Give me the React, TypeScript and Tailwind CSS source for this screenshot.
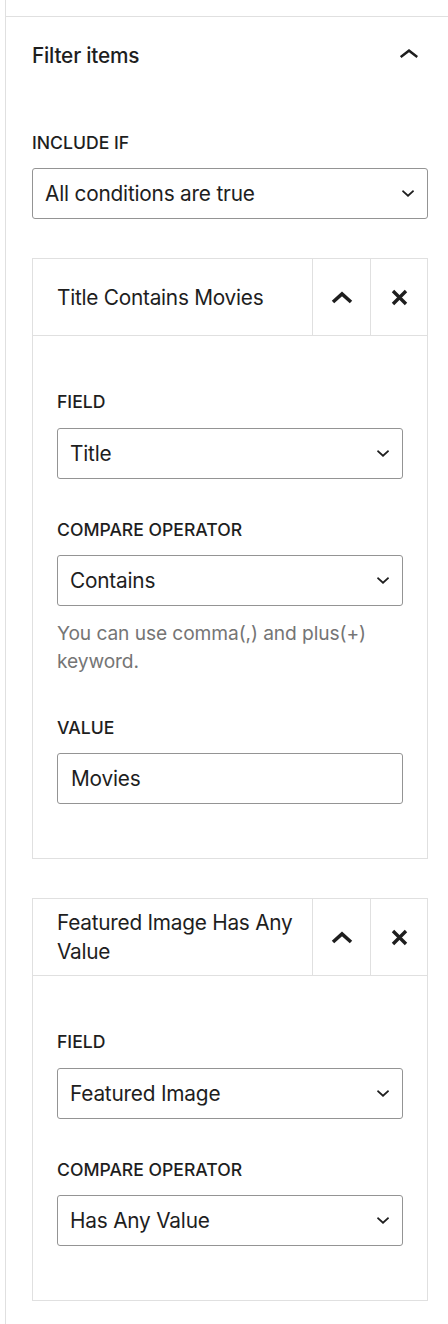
import type { ReactNode } from 'react';

const font = { fontFamily: 'Inter, "Noto Sans", sans-serif' };

const ChevronDown = () => (
  <svg width="12" height="7" viewBox="6.5 10.4 11 5.6" preserveAspectRatio="none" className="shrink-0">
    <path d="M17.5 11.6L12 16l-5.5-4.4.9-1.2L12 14l4.6-3.6 1 1.2z" fill="#1e1e1e" />
  </svg>
);

const PanelChevronUp = () => (
  <svg width="18" height="9" viewBox="6.5 8 11 5.6" preserveAspectRatio="none">
    <path d="M6.5 12.4L12 8l5.5 4.4-.9 1.2L12 10l-4.6 3.6-1-1.2z" fill="#1e1e1e" />
  </svg>
);

const BoldChevronUp = () => (
  <svg width="22" height="13" viewBox="0 0 22 13">
    <polyline points="2,11 11,3 20,11" fill="none" stroke="#1e1e1e" strokeWidth="3.6" />
  </svg>
);

const BoldClose = () => (
  <svg width="17" height="17" viewBox="0 0 17 17">
    <path d="M2 2L15 15M15 2L2 15" fill="none" stroke="#1e1e1e" strokeWidth="3.4" />
  </svg>
);

const Label = ({ children }: { children: ReactNode }) => (
  <div className="text-[17.6px] leading-[24.6px] font-medium uppercase text-[#1e1e1e] mb-[12.8px]">{children}</div>
);

const Select = ({ value }: { value: string }) => (
  <div className="h-[51px] border border-[#949494] rounded-[3px] flex items-center justify-between pl-[12px] pr-[13px] bg-white">
    <span className="text-[20.8px] tracking-[-0.2px] text-[#1e1e1e]">{value}</span>
    <ChevronDown />
  </div>
);

const Input = ({ value }: { value: string }) => (
  <div className="h-[51px] border border-[#949494] rounded-[3px] flex items-center pl-[13px] bg-white">
    <span className="text-[20.8px] tracking-[-0.2px] text-[#1e1e1e]">{value}</span>
  </div>
);

const ConditionCard = ({ title, children }: { title: string; children: ReactNode }) => (
  <div className="border border-[#e0e0e0]">
    <div className="flex h-[77px] border-b border-[#e0e0e0]">
      <div className="flex-1 flex items-center pl-[24px] pr-[6px] text-[20.8px] leading-[29px] tracking-[-0.25px] text-[#1e1e1e]">
        {title}
      </div>
      <button className="w-[58px] border-l border-[#e0e0e0] flex items-center justify-center">
        <BoldChevronUp />
      </button>
      <button className="w-[57px] border-l border-[#e0e0e0] flex items-center justify-center">
        <BoldClose />
      </button>
    </div>
    <div className="pt-[54px] pb-[54px] px-[24px] flex flex-col gap-[39px]">{children}</div>
  </div>
);

export default function App() {
  return (
    <div className="w-[448px] h-[1324px] bg-white overflow-hidden" style={font}>
      <div className="ml-[5px] h-full border-l border-[#e0e0e0]">
        <div className="h-[17px] border-b border-[#e0e0e0]" />
        <div className="pl-[26px] pr-[20px]">
          <div className="h-[77px] flex items-center justify-between">
            <span className="text-[20.8px] font-medium tracking-[-0.2px] text-[#1e1e1e]">Filter items</span>
            <span className="mr-[10px] -mt-[4px]">
              <PanelChevronUp />
            </span>
          </div>
          <div className="mt-[37px]">
            <Label>Include if</Label>
            <Select value="All conditions are true" />
          </div>
          <div className="mt-[39px] flex flex-col gap-[39px]">
            <ConditionCard title="Title Contains Movies">
              <div>
                <Label>Field</Label>
                <Select value="Title" />
              </div>
              <div>
                <Label>Compare operator</Label>
                <Select value="Contains" />
                <p className="mt-[12.8px] mb-[2px] text-[19.2px] leading-[28px] tracking-[-0.1px] text-[#757575]">
                  You can use comma(,) and plus(+) keyword.
                </p>
              </div>
              <div>
                <Label>Value</Label>
                <Input value="Movies" />
              </div>
            </ConditionCard>
            <ConditionCard title="Featured Image Has Any Value">
              <div>
                <Label>Field</Label>
                <Select value="Featured Image" />
              </div>
              <div>
                <Label>Compare operator</Label>
                <Select value="Has Any Value" />
              </div>
            </ConditionCard>
          </div>
        </div>
      </div>
    </div>
  );
}
